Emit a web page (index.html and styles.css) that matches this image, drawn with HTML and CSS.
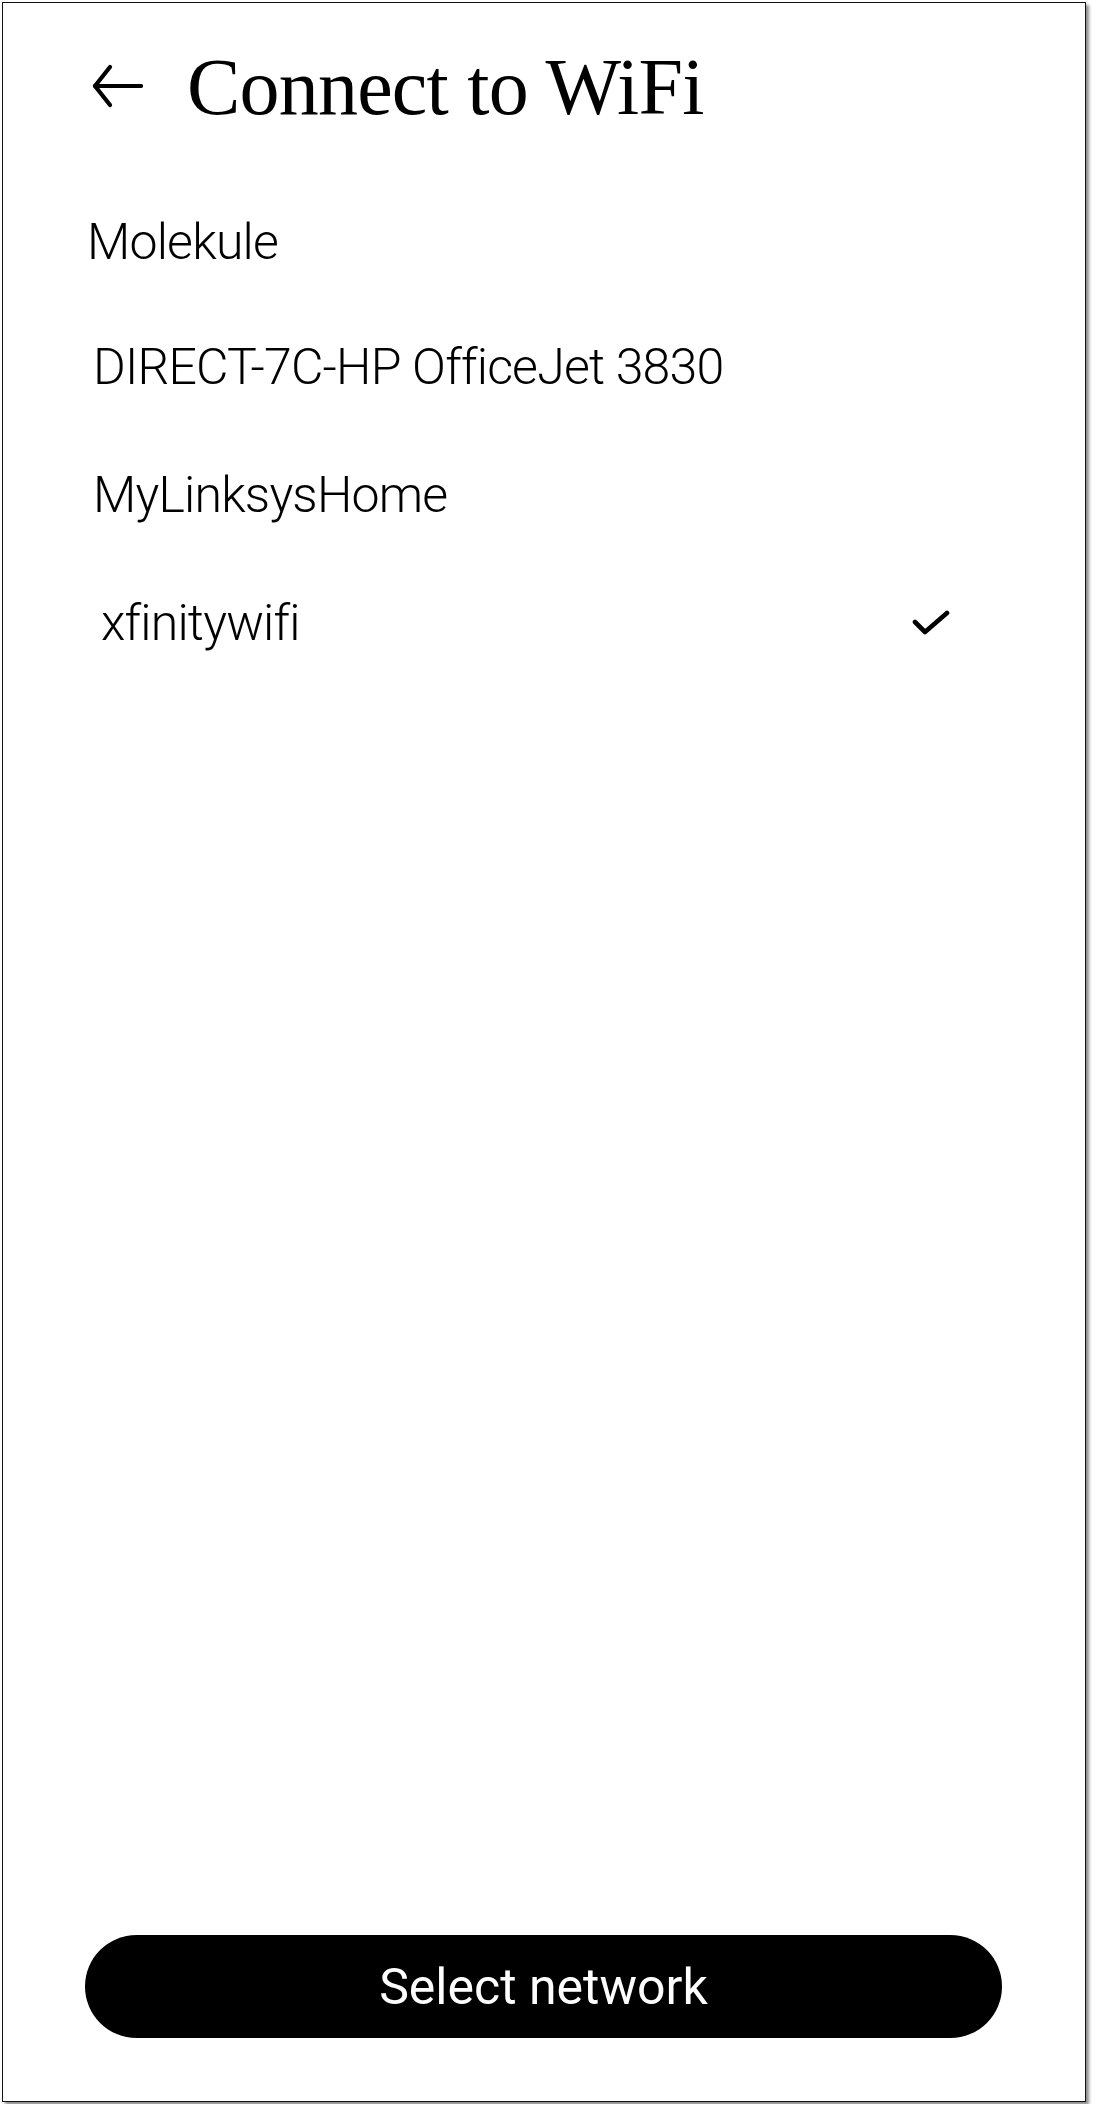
FILE: index.html
```html
<!DOCTYPE html>
<html lang="en">
<head>
  <meta charset="UTF-8">
  <meta name="viewport" content="width=device-width, initial-scale=1.0">
  <title>Connect to WiFi</title>
  <link rel="stylesheet" href="styles.css">
</head>
<body>
  <div class="frame">
    <!-- Header -->
    <div class="header">
      <button class="back-btn" aria-label="Back">
        <svg width="52" height="44" viewBox="0 0 52 44" fill="none" stroke="#000" stroke-width="4.2" stroke-linecap="round" stroke-linejoin="round">
          <path d="M50 22 H4"/>
          <path d="M19 3 L4 22 L19 41"/>
        </svg>
      </button>
      <h1 class="title">Connect to WiFi</h1>
    </div>

    <!-- Network list -->
    <ul class="networks">
      <li class="network network-first">Molekule</li>
      <li class="network">DIRECT-7C-HP OfficeJet 3830</li>
      <li class="network">MyLinksysHome</li>
      <li class="network network-selected">
        <span>xfinitywifi</span>
        <svg class="check" width="38" height="28" viewBox="0 0 38 28" fill="none" stroke="#000" stroke-width="4.6" stroke-linecap="round" stroke-linejoin="round">
          <path d="M3 13 L13 23 L35 4"/>
        </svg>
      </li>
    </ul>

    <div class="footer">
      <button class="select-btn">Select network</button>
    </div>
  </div>
</body>
</html>
```

FILE: styles.css
```css
body {
  margin: 0;
  padding: 0;
  background: #fff;
  font-family: 'Roboto', 'Liberation Sans', sans-serif;
  color: #000;
}

/* Phone frame */
.frame {
  margin: 2px;
  width: 1084px;
  height: 2100px;
  box-sizing: border-box;
  border: 1px solid #111;
  background: #fff;
  box-shadow: 3px 3px 3px rgba(0, 0, 0, 0.45);
  display: flex;
  flex-direction: column;
}

/* Header */
.header {
  display: flex;
  align-items: center;
  height: 175px;
  box-sizing: border-box;
  padding: 0 0 10px 88px;
}

.back-btn {
  border: none;
  background: none;
  padding: 0;
  margin: 0 44px 0 0;
  display: flex;
  cursor: pointer;
}

.title {
  margin: 3px 0 0 0;
  font-family: 'Liberation Serif', 'Times New Roman', serif;
  font-weight: normal;
  font-size: 80px;
  line-height: 1;
  letter-spacing: -0.8px;
}

/* Network list */
.networks {
  list-style: none;
  margin: 0;
  padding: 0;
}

.network {
  display: flex;
  align-items: center;
  justify-content: space-between;
  height: 128px;
  padding: 0 135px 0 90px;
  font-size: 50px;
  font-weight: 300;
  letter-spacing: -0.8px;
}

.network-first {
  height: 122px;
  margin-top: 3px;
  padding-left: 84px;
}

.network-selected {
  padding-left: 98px;
}

/* Bottom button */
.footer {
  margin-top: auto;
  padding: 0 83px 63px 82px;
}

.select-btn {
  width: 100%;
  height: 103px;
  border: none;
  border-radius: 52px;
  background: #000;
  color: #fff;
  font-family: 'Roboto', 'Liberation Sans', sans-serif;
  font-size: 50px;
  cursor: pointer;
}
```
